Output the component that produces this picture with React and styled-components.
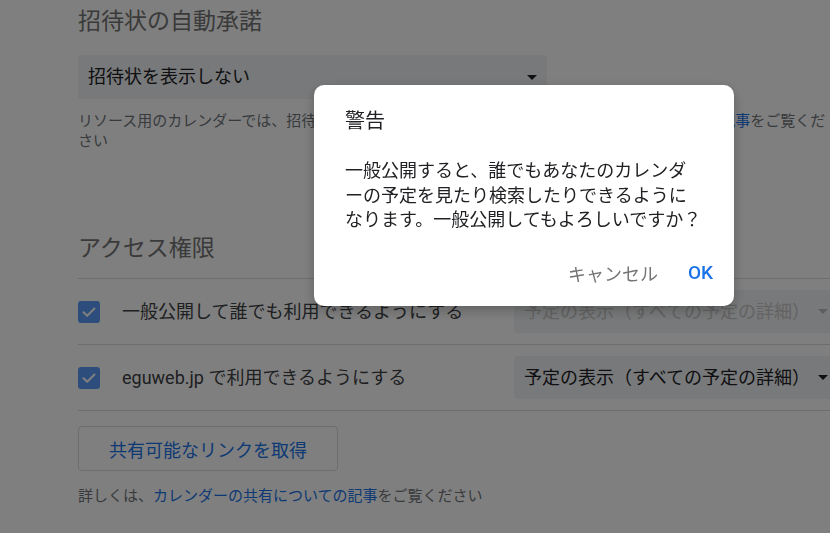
import React from 'react';
import styled, { createGlobalStyle } from 'styled-components';

const GlobalStyle = createGlobalStyle`
  html, body {
    margin: 0;
    padding: 0;
    width: 830px;
    height: 533px;
    overflow: hidden;
    background: #ffffff;
  }
  body {
    font-family: Roboto, "Noto Sans CJK JP", sans-serif;
  }
`;

const Page = styled.div`
  width: 760px;
  padding: 7px 0 0 78px;
`;

const SectionTitle = styled.h2`
  margin: ${(p) => p.$top || 0}px 0 0;
  font-size: 23px;
  font-weight: 400;
  line-height: 30px;
  color: #757575;
  white-space: nowrap;
`;

const Select = styled.div`
  display: flex;
  align-items: center;
  justify-content: space-between;
  box-sizing: border-box;
  flex: none;
  width: ${(p) => p.$width}px;
  height: ${(p) => p.$height}px;
  margin-top: ${(p) => p.$top || 0}px;
  padding: 0 10px;
  background: #f1f3f4;
  border-radius: 4px;
  font-size: 18px;
  line-height: 24px;
  color: ${(p) => (p.$disabled ? '#c6c6c6' : '#202124')};
  white-space: nowrap;
`;

const Arrow = styled.span`
  width: 0;
  height: 0;
  border-left: 5px solid transparent;
  border-right: 5px solid transparent;
  border-top: 5px solid ${(p) => (p.$disabled ? '#bdbdbd' : '#202124')};
`;

const Help = styled.p`
  margin: ${(p) => p.$top}px 0 0;
  max-width: 755px;
  font-size: 15px;
  line-height: 20px;
  color: #70757a;
`;

const Link = styled.a`
  color: #1a73e8;
  text-decoration: none;
`;

const List = styled.div`
  margin-top: 14px;
  border-top: 1px solid #dadce0;
`;

const Row = styled.div`
  display: flex;
  align-items: center;
  gap: 22px;
  height: 65px;
  border-bottom: 1px solid #dadce0;
`;

const Check = styled.span`
  display: flex;
  align-items: center;
  justify-content: center;
  flex: none;
  width: 22px;
  height: 22px;
  border-radius: 3px;
  background: #5a9cf8;
`;

const Label = styled.span`
  flex: 1;
  font-size: 18px;
  line-height: 24px;
  color: #3c4043;
  white-space: nowrap;
`;

const OutlineButton = styled.button`
  display: block;
  box-sizing: border-box;
  width: 260px;
  height: 45px;
  margin-top: 15px;
  padding: 0;
  border: 1px solid #dadce0;
  border-radius: 4px;
  background: #ffffff;
  font-family: Roboto, "Noto Sans CJK JP", sans-serif;
  font-size: 18px;
  color: #1a73e8;
`;

const Scrim = styled.div`
  position: fixed;
  inset: 0;
  background: rgba(0, 0, 0, 0.5);
`;

const Dialog = styled.div`
  position: absolute;
  left: 314px;
  top: 85px;
  box-sizing: border-box;
  width: 420px;
  height: 221px;
  padding: 22px 13px 15px 31px;
  background: #ffffff;
  border-radius: 10px;
  box-shadow: 0 4px 12px rgba(0, 0, 0, 0.25);
`;

const DialogTitle = styled.h3`
  margin: 0;
  font-size: 20px;
  font-weight: 400;
  line-height: 28px;
  color: #202124;
`;

const DialogBody = styled.p`
  margin: 24px 0 0;
  font-size: 18px;
  line-height: 24.5px;
  color: #202124;
  white-space: nowrap;
`;

const Actions = styled.div`
  display: flex;
  justify-content: flex-end;
  gap: 14px;
  margin-top: 22px;
`;

const TextButton = styled.button`
  height: 36px;
  padding: 0 8px;
  border: none;
  background: none;
  font-family: Roboto, "Noto Sans CJK JP", sans-serif;
  font-size: ${(p) => (p.$primary ? 19 : 18)}px;
  font-weight: ${(p) => (p.$primary ? 500 : 400)};
  color: ${(p) => (p.$primary ? '#1a73e8' : '#757575')};
`;

const CheckIcon = () => (
  <svg width="16" height="16" viewBox="0 0 16 16" fill="none">
    <path d="M2.5 8.2 L6.2 11.8 L13.5 4.5" stroke="#ffffff" strokeWidth="2" strokeLinecap="round" strokeLinejoin="round" />
  </svg>
);

const rows = [
  { label: '一般公開して誰でも利用できるようにする', value: '予定の表示（すべての予定の詳細）', disabled: true },
  { label: 'eguweb.jp で利用できるようにする', value: '予定の表示（すべての予定の詳細）', disabled: false },
];

export default function App() {
  return (
    <>
      <GlobalStyle />
      <Page>
        <SectionTitle>招待状の自動承諾</SectionTitle>
        <Select $width={469} $height={44} $top={18}>
          招待状を表示しない
          <Arrow />
        </Select>
        <Help $top={12}>
          リソース用のカレンダーでは、招待状の自動承諾は設定できません。詳しくは、
          <Link href="#">リソース予約の記事</Link>をご覧ください
        </Help>

        <SectionTitle $top={83}>アクセス権限</SectionTitle>
        <List>
          {rows.map((r) => (
            <Row key={r.label}>
              <Check>
                <CheckIcon />
              </Check>
              <Label>{r.label}</Label>
              <Select $width={324} $height={43} $disabled={r.disabled}>
                {r.value}
                <Arrow $disabled={r.disabled} />
              </Select>
            </Row>
          ))}
        </List>
        <OutlineButton>共有可能なリンクを取得</OutlineButton>
        <Help $top={15}>
          詳しくは、<Link href="#">カレンダーの共有についての記事</Link>をご覧ください
        </Help>
      </Page>

      <Scrim>
        <Dialog role="dialog">
          <DialogTitle>警告</DialogTitle>
          <DialogBody>
            一般公開すると、誰でもあなたのカレンダ
            <br />
            ーの予定を見たり検索したりできるように
            <br />
            なります。一般公開してもよろしいですか？
          </DialogBody>
          <Actions>
            <TextButton>キャンセル</TextButton>
            <TextButton $primary>OK</TextButton>
          </Actions>
        </Dialog>
      </Scrim>
    </>
  );
}
